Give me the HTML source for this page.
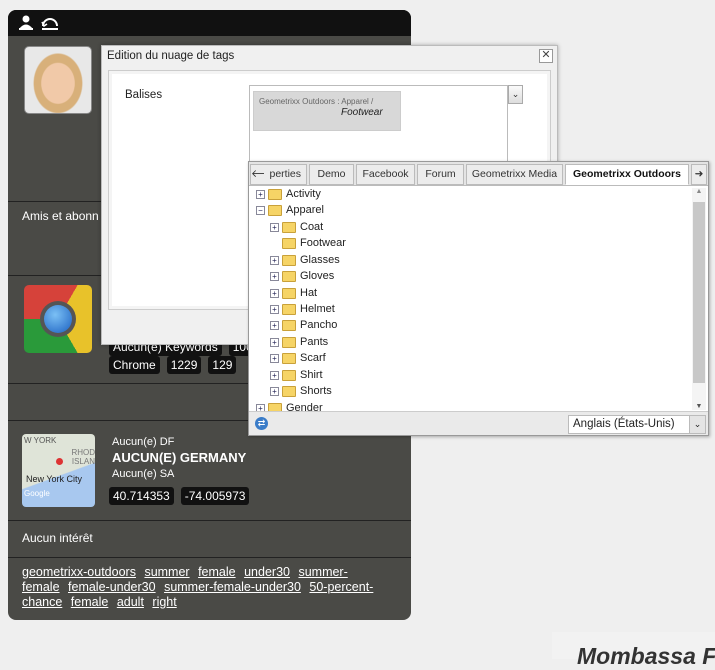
<!DOCTYPE html>
<html><head><meta charset="utf-8"><style>
*{box-sizing:border-box;margin:0;padding:0}
body{width:715px;height:659px;background:#efefef;position:relative;overflow:hidden;font-family:"Liberation Sans",Tahoma,sans-serif}
.abs{position:absolute}
.panel{left:8px;top:10px;width:403px;height:610px;background:#4a4a46;border-radius:8px;overflow:hidden}
.top{left:0;top:0;width:403px;height:26px;background:#111}
.sep{left:0;width:403px;height:1px;background:#222}
.w{color:#fff;font-size:12px}
.badge{display:inline-block;background:#111;color:#fff;font-size:12px;padding:2px 4px;border-radius:3px;margin-right:7px}
.tags{left:14px;top:555px;width:360px;color:#fff;font-size:12.5px;line-height:15px}
.tags u{margin-right:5px}
.dlg{left:101px;top:45px;width:457px;height:300px;background:#f0f0f0;border:1px solid #bbb;box-shadow:0 0 4px rgba(0,0,0,.3)}
.tree{left:248px;top:161px;width:461px;height:275px;background:#fff;border:1px solid #999;box-shadow:1px 1px 3px rgba(0,0,0,.3);font-family:"Liberation Sans",Tahoma,sans-serif;font-size:11px;color:#222}
.tab{position:absolute;top:2px;height:21px;border:1px solid #bbb;background:#ececec;line-height:19px;text-align:center;font-size:10.5px;color:#333;white-space:nowrap;overflow:hidden}
.row{position:absolute;height:16px;line-height:16px}
.pl{display:inline-block;width:9px;height:9px;border:1px solid #889;background:#fff;font-size:8px;line-height:7px;text-align:center;vertical-align:middle;margin-right:3px;color:#225}
.fd{display:inline-block;width:14px;height:11px;background:#f6d466;border:1px solid #c9a13a;border-radius:1px;vertical-align:middle;margin-right:4px}
</style></head><body>
<div class="abs panel">
 <div class="abs top"></div>
 <svg class="abs" style="left:10px;top:5px" width="44" height="16"><circle cx="8" cy="4" r="3.5" fill="#fff"/><path d="M1 14 Q8 5 15 14Z" fill="#fff"/><rect x="1" y="13" width="14" height="2" fill="#fff"/><path d="M25 11 A7 7 0 0 1 39 11" stroke="#fff" stroke-width="2" fill="none"/><path d="M24 7 l2 4 l3 -2" stroke="#fff" stroke-width="1.5" fill="none"/><rect x="24" y="13" width="16" height="2" fill="#fff"/></svg>
 <div class="abs" style="left:16px;top:36px;width:68px;height:68px;border-radius:5px;background:radial-gradient(ellipse 45% 55% at 50% 55%,#f1c9a8 0 55%,#d8b07a 58% 80%,#e8e8e8 84%);border:1px solid #888"></div>
 <div class="abs sep" style="top:191px"></div>
 <div class="abs w" style="left:14px;top:199px">Amis et abonn</div>
 <div class="abs sep" style="top:265px"></div>
 <div class="abs" style="left:16px;top:275px;width:68px;height:68px;border-radius:5px;background:conic-gradient(from 30deg,#e8c22a 0 120deg,#2a9a3a 120deg 240deg,#d6423a 240deg 360deg)"><div style="position:absolute;left:16px;top:16px;width:36px;height:36px;border-radius:50%;background:#555"></div><div style="position:absolute;left:20px;top:20px;width:28px;height:28px;border-radius:50%;background:radial-gradient(circle at 40% 35%,#7bc0f5,#1a5fc0)"></div></div>
 <div class="abs" style="left:101px;top:328px"><span class="badge">Aucun(e) Keywords</span><span class="badge">1000</span></div>
 <div class="abs" style="left:101px;top:346px"><span class="badge">Chrome</span><span class="badge">1229</span><span class="badge">129</span></div>
 <div class="abs sep" style="top:373px"></div>
 <div class="abs sep" style="top:410px"></div>
 <div class="abs" style="left:14px;top:424px;width:73px;height:73px;border-radius:4px;background:linear-gradient(160deg,#dfe4d8 0 55%,#a8c8ef 56%);"><div style="position:absolute;left:2px;top:2px;font-size:8px;color:#555">W YORK</div><div style="position:absolute;right:0;top:14px;font-size:8px;color:#777;text-align:right;line-height:9px">RHOD<br>ISLAN</div><div style="position:absolute;left:34px;top:24px;width:7px;height:7px;border-radius:50%;background:#d33"></div><div style="position:absolute;left:4px;top:40px;font-size:9px;color:#222">New York City</div><div style="position:absolute;left:2px;top:55px;font-size:8px;color:#fff">Google</div></div>
 <div class="abs w" style="left:104px;top:425px;font-size:11px;line-height:15px">Aucun(e) DF<br><b style="font-size:13px">AUCUN(E) GERMANY</b><br>Aucun(e) SA</div>
 <div class="abs" style="left:101px;top:477px"><span class="badge">40.714353</span><span class="badge">-74.005973</span></div>
 <div class="abs sep" style="top:510px"></div>
 <div class="abs w" style="left:14px;top:521px">Aucun intérêt</div>
 <div class="abs sep" style="top:547px"></div>
 <div class="abs tags"><u>geometrixx-outdoors</u> <u>summer</u> <u>female</u> <u>under30</u> <u>summer-female</u> <u>female-under30</u> <u>summer-female-under30</u> <u>50-percent-chance</u> <u>female</u> <u>adult</u> <u>right</u></div>
</div>
<div class="abs dlg">
 <div class="abs" style="left:5px;top:4px;font-size:11.5px;color:#222">Edition du nuage de tags</div>
 <div class="abs" style="left:437px;top:3px;width:14px;height:14px;border:1px solid #999;background:#fff;font-size:11px;line-height:11px;text-align:center;color:#444">✕</div>
 <div class="abs" style="left:6px;top:24px;width:443px;height:240px;border:1px solid #ccc;background:#f4f4f4"><div style="position:absolute;left:3px;top:3px;right:3px;bottom:3px;background:#fff"></div></div>
 <div class="abs" style="left:23px;top:43px;font-size:11.5px;color:#222">Balises</div>
 <div class="abs" style="left:147px;top:39px;width:259px;height:80px;border:1px solid #bbb;background:#fff"><div style="position:absolute;left:3px;top:5px;width:148px;height:40px;background:#d8d8d8;border:1px solid #ccc;font-size:8px;color:#666;padding:4px 5px;line-height:11px">Geometrixx Outdoors : Apparel /<br><i style="font-size:10px;color:#222;padding-left:82px">Footwear</i></div></div>
 <div class="abs" style="left:406px;top:39px;width:15px;height:19px;border:1px solid #aaa;background:linear-gradient(#fafafa,#ddd);font-size:9px;text-align:center;line-height:17px;color:#333">⌄</div>
</div>
<div class="abs tree">
 <div style="position:absolute;left:0;top:0;width:459px;height:24px;background:#e4e4e4;border-bottom:1px solid #bbb"></div>
 <div class="tab" style="left:10px;width:48px;text-align:right;padding-right:5px">perties</div>
 <div class="tab" style="left:1px;width:14px;border-right:none">🡐</div>
 <div class="tab" style="left:60px;width:45px">Demo</div>
 <div class="tab" style="left:107px;width:59px">Facebook</div>
 <div class="tab" style="left:168px;width:47px">Forum</div>
 <div class="tab" style="left:217px;width:97px">Geometrixx Media</div>
 <div class="tab" style="left:316px;width:124px;background:#fff;border-bottom-color:#fff;font-weight:bold;color:#111">Geometrixx Outdoors</div>
 <div class="tab" style="left:442px;width:16px">➜</div>
 <div style="position:absolute;left:443px;top:26px;width:14px;height:222px;background:#f4f4f4"><div style="position:absolute;left:1px;top:14px;width:12px;height:181px;background:#c8c8c8"></div><div style="position:absolute;top:0;width:14px;text-align:center;font-size:7px;color:#888">▲</div><div style="position:absolute;bottom:0;width:14px;text-align:center;font-size:7px;color:#555">▼</div></div>
 <div class="row" style="left:7px;top:24px"><span class="pl">+</span><span class="fd"></span>Activity</div>
 <div class="row" style="left:7px;top:40px"><span class="pl">−</span><span class="fd"></span>Apparel</div>
 <div class="row" style="left:21px;top:57px"><span class="pl">+</span><span class="fd"></span>Coat</div>
 <div class="row" style="left:33px;top:73px"><span class="fd"></span>Footwear</div>
 <div class="row" style="left:21px;top:90px"><span class="pl">+</span><span class="fd"></span>Glasses</div>
 <div class="row" style="left:21px;top:106px"><span class="pl">+</span><span class="fd"></span>Gloves</div>
 <div class="row" style="left:21px;top:123px"><span class="pl">+</span><span class="fd"></span>Hat</div>
 <div class="row" style="left:21px;top:139px"><span class="pl">+</span><span class="fd"></span>Helmet</div>
 <div class="row" style="left:21px;top:155px"><span class="pl">+</span><span class="fd"></span>Pancho</div>
 <div class="row" style="left:21px;top:172px"><span class="pl">+</span><span class="fd"></span>Pants</div>
 <div class="row" style="left:21px;top:188px"><span class="pl">+</span><span class="fd"></span>Scarf</div>
 <div class="row" style="left:21px;top:205px"><span class="pl">+</span><span class="fd"></span>Shirt</div>
 <div class="row" style="left:21px;top:221px"><span class="pl">+</span><span class="fd"></span>Shorts</div>
 <div style="position:absolute;left:0;top:238px;width:443px;height:12px;overflow:hidden"><div class="row" style="left:7px;top:0"><span class="pl">+</span><span class="fd"></span>Gender</div></div>
 <div style="position:absolute;left:0;top:249px;width:459px;height:24px;background:#eaeaea;border-top:1px solid #ccc"></div>
 <div style="position:absolute;left:6px;top:255px;width:13px;height:13px;border-radius:50%;background:#3a7cc8;color:#fff;font-size:9px;text-align:center;line-height:13px">⇄</div>
 <div style="position:absolute;left:319px;top:253px;width:138px;height:19px;border:1px solid #bbb;background:#fff;font-size:11.5px;line-height:17px;padding-left:4px;color:#222">Anglais (États-Unis)<span style="position:absolute;right:0;top:0;width:16px;height:17px;background:#e4e4e4;border-left:1px solid #bbb;text-align:center;font-size:9px">⌄</span></div>
</div>
<div class="abs" style="left:552px;top:632px;width:163px;height:27px;background:#f2f2f2"></div>
<div class="abs" style="left:577px;top:643px;font-size:23px;font-weight:bold;font-style:italic;color:#333;white-space:nowrap">Mombassa F</div>
</body></html>
